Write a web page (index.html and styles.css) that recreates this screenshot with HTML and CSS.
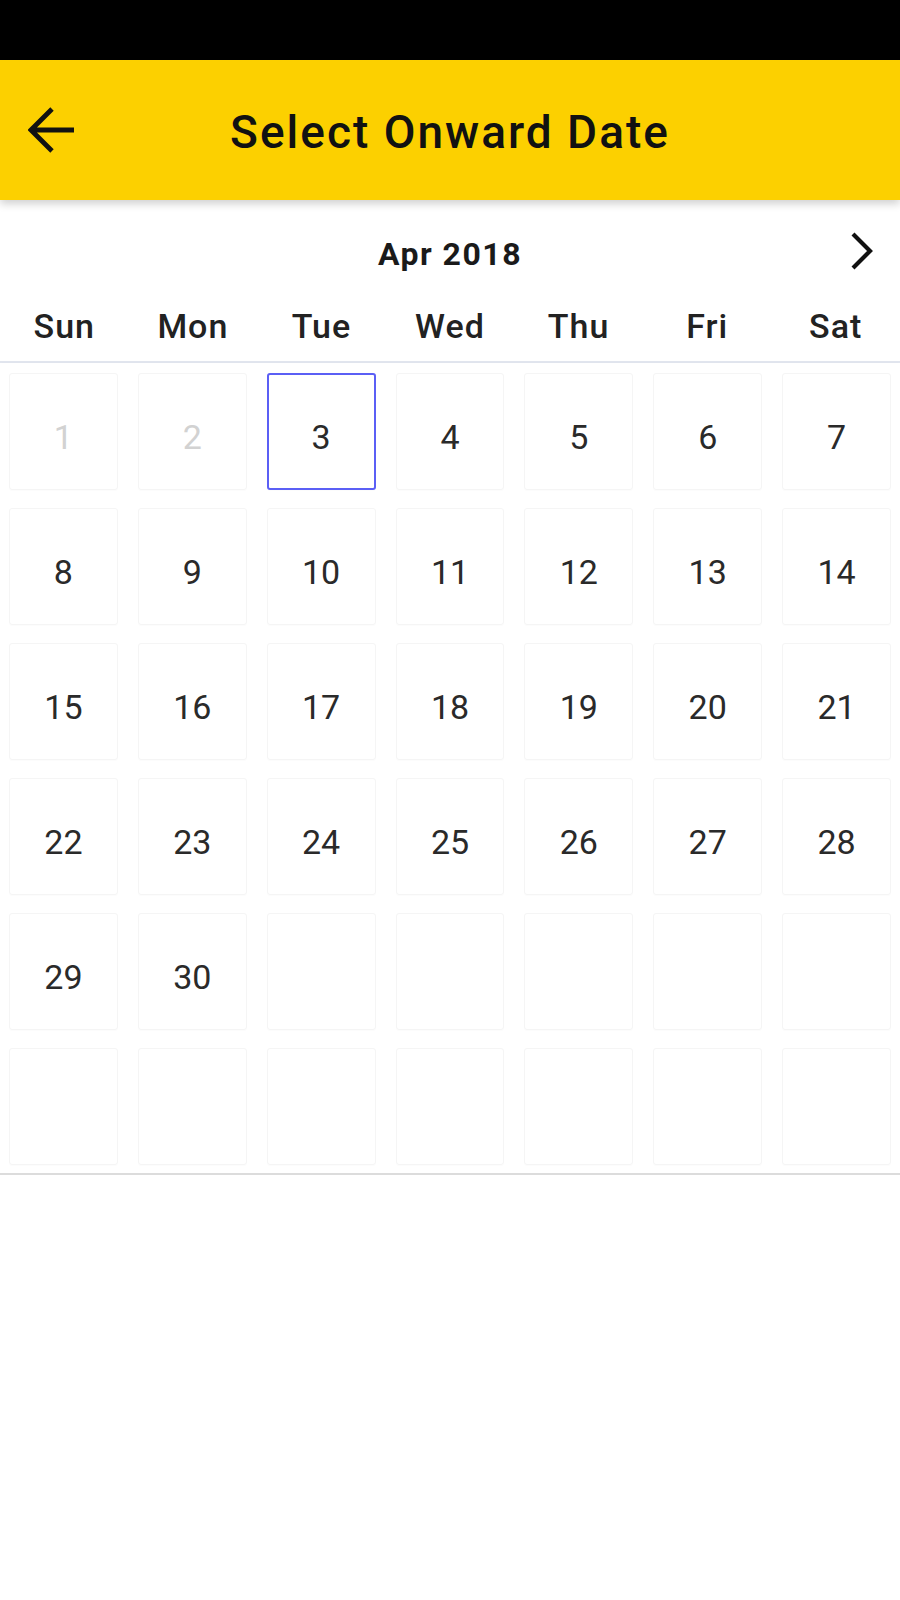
FILE: index.html
```html
<!DOCTYPE html>
<html lang="en">
<head>
<meta charset="utf-8">
<title>Select Onward Date</title>
<link rel="stylesheet" href="styles.css">
</head>
<body>
<div class="statusbar"></div>
<header class="appbar">
  <div class="back">
    <svg width="48" height="48" viewBox="0 0 48 48" aria-hidden="true">
      <path d="M3 24H46M24 3L3 24L24 45" fill="none" stroke="#111" stroke-width="4.8" stroke-linejoin="miter"/>
    </svg>
  </div>
  <h1 class="title">Select Onward Date</h1>
  <div class="spacer"></div>
</header>
<main class="calendar">
  <div class="month-row">
    <span class="month">Apr 2018</span>
    <svg class="next" width="26" height="40" viewBox="0 0 26 40" aria-hidden="true">
      <path d="M4 3L21 20L4 37" fill="none" stroke="#111" stroke-width="4.2"/>
    </svg>
  </div>
  <div class="weekdays">
    <span>Sun</span><span>Mon</span><span>Tue</span><span>Wed</span><span>Thu</span><span>Fri</span><span>Sat</span>
  </div>
  <div class="grid">
    <div class="cell disabled">1</div>
    <div class="cell disabled">2</div>
    <div class="cell selected">3</div>
    <div class="cell">4</div>
    <div class="cell">5</div>
    <div class="cell">6</div>
    <div class="cell">7</div>
    <div class="cell">8</div>
    <div class="cell">9</div>
    <div class="cell">10</div>
    <div class="cell">11</div>
    <div class="cell">12</div>
    <div class="cell">13</div>
    <div class="cell">14</div>
    <div class="cell">15</div>
    <div class="cell">16</div>
    <div class="cell">17</div>
    <div class="cell">18</div>
    <div class="cell">19</div>
    <div class="cell">20</div>
    <div class="cell">21</div>
    <div class="cell">22</div>
    <div class="cell">23</div>
    <div class="cell">24</div>
    <div class="cell">25</div>
    <div class="cell">26</div>
    <div class="cell">27</div>
    <div class="cell">28</div>
    <div class="cell">29</div>
    <div class="cell">30</div>
    <div class="cell"></div>
    <div class="cell"></div>
    <div class="cell"></div>
    <div class="cell"></div>
    <div class="cell"></div>
    <div class="cell"></div>
    <div class="cell"></div>
    <div class="cell"></div>
    <div class="cell"></div>
    <div class="cell"></div>
    <div class="cell"></div>
    <div class="cell"></div>
  </div>
</main>
</body>
</html>
```
FILE: styles.css
```css
* { box-sizing: border-box; }
html, body {
  margin: 0;
  padding: 0;
  background: #fff;
  font-family: Roboto, "Noto Sans", "Liberation Sans", sans-serif;
  color: #222;
}
.statusbar {
  height: 60px;
  background: #000;
}
.appbar {
  height: 140px;
  background: #fcd000;
  display: flex;
  align-items: center;
  box-shadow: 0 4px 8px rgba(0, 0, 0, 0.18);
  position: relative;
  z-index: 1;
}
.back {
  width: 110px;
  padding-left: 28px;
  display: flex;
  align-items: center;
}
.back svg { display: block; }
.spacer { width: 110px; }
.title {
  flex: 1;
  margin: 0;
  text-align: center;
  font-size: 46px;
  font-weight: 500;
  letter-spacing: 2px;
  color: #111;
  line-height: 1;
  padding-top: 4px;
}
.calendar {
  display: flex;
  flex-direction: column;
}
.month-row {
  height: 100px;
  padding-top: 8px;
  display: flex;
  align-items: center;
  justify-content: center;
  position: relative;
}
.month {
  font-size: 32px;
  font-weight: 700;
  letter-spacing: 1.5px;
  color: #1a1a1a;
}
.next {
  position: absolute;
  right: 25px;
  top: 31px;
}
.weekdays {
  display: grid;
  grid-template-columns: repeat(7, 1fr);
  height: 63px;
  padding-bottom: 10px;
  border-bottom: 2px solid #e1e5ee;
  align-items: center;
  text-align: center;
  font-size: 34px;
  font-weight: 500;
  letter-spacing: 1px;
  color: #222;
}
.grid {
  display: grid;
  grid-template-columns: repeat(7, 1fr);
  grid-auto-rows: 117px;
  column-gap: 20px;
  row-gap: 18px;
  padding: 10px 9px 8px;
  border-bottom: 2px solid #dcdcdc;
  box-shadow: 0 2px 3px rgba(0, 0, 0, 0.08);
}
.cell {
  border: 1px solid #f5f5f5;
  border-radius: 3px;
  box-shadow: 0 1px 1px rgba(0, 0, 0, 0.015);
  display: flex;
  align-items: center;
  justify-content: center;
  padding-top: 10px;
  font-size: 34px;
  font-weight: 400;
  color: #2a2a2a;
}
.cell.disabled { color: #d2d2d2; }
.cell.selected {
  border: 2px solid #5b5ff5;
  border-radius: 3px;
}
```
